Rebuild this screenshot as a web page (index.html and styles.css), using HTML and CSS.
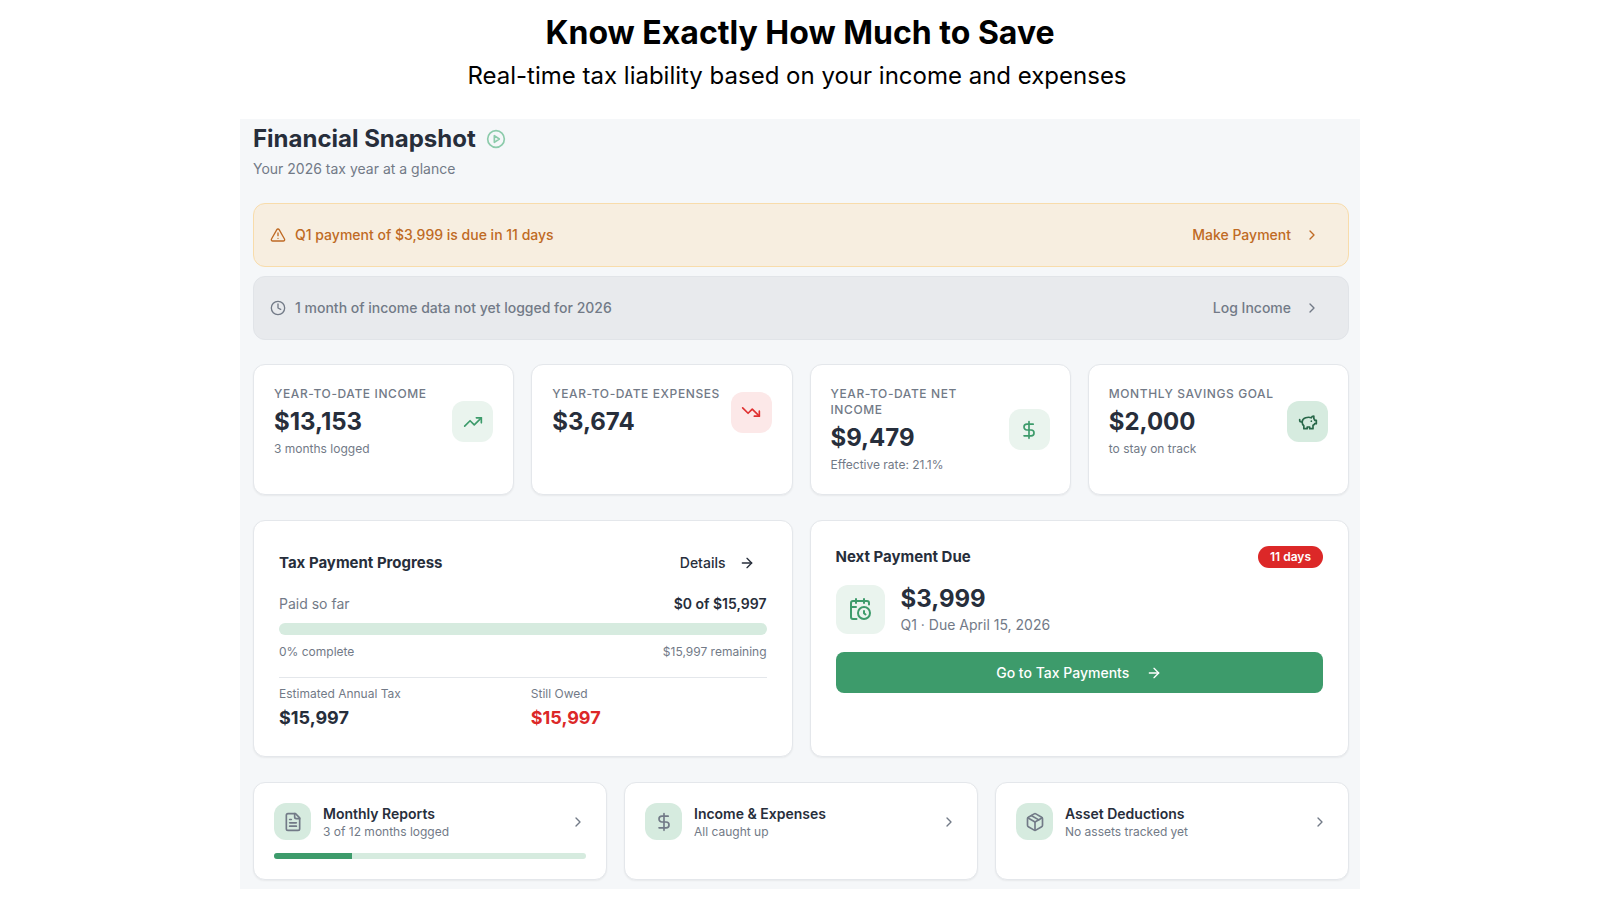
FILE: index.html
```html
<!DOCTYPE html>
<html lang="en">
<head>
    <meta charset="UTF-8">
    <meta name="viewport" content="width=device-width, initial-scale=1.0">
    <title>Financial Snapshot</title>
    <link rel="stylesheet" href="styles.css">
</head>
<body>
    <header class="hero">
        <h1>Know Exactly How Much to Save</h1>
        <p>Real-time tax liability based on your income and expenses</p>
    </header>

    <main class="dashboard">
        <div class="page-title">
            <h2>Financial Snapshot</h2>
            <button class="play" aria-label="Play tour">
                <svg class="icon icon-md" viewBox="0 0 24 24"><circle cx="12" cy="12" r="10"/><path d="m10 8 6 4-6 4z"/></svg>
            </button>
        </div>
        <p class="page-subtitle">Your 2026 tax year at a glance</p>

        <!-- Alerts -->
        <section class="alerts">
            <div class="alert alert-warning">
                <svg class="icon icon-sm" viewBox="0 0 24 24"><path d="m21.73 18-8-14a2 2 0 0 0-3.48 0l-8 14A2 2 0 0 0 4 21h16a2 2 0 0 0 1.73-3"/><path d="M12 9v4"/><path d="M12 17h.01"/></svg>
                <span>Q1 payment of $3,999 is due in 11 days</span>
                <button class="ghost">Make Payment
                    <svg class="icon icon-sm" viewBox="0 0 24 24"><path d="m9 18 6-6-6-6"/></svg>
                </button>
            </div>
            <div class="alert alert-muted">
                <svg class="icon icon-sm" viewBox="0 0 24 24"><circle cx="12" cy="12" r="10"/><path d="M12 6v6l4 2"/></svg>
                <span>1 month of income data not yet logged for 2026</span>
                <button class="ghost">Log Income
                    <svg class="icon icon-sm" viewBox="0 0 24 24"><path d="m9 18 6-6-6-6"/></svg>
                </button>
            </div>
        </section>

        <!-- Stats -->
        <section class="stats">
            <div class="card stat">
                <div class="stat-row">
                    <div>
                        <h3>Year-to-date Income</h3>
                        <p class="amount">$13,153</p>
                        <p class="note">3 months logged</p>
                    </div>
                    <div class="tile tile-green">
                        <svg class="icon icon-md" viewBox="0 0 24 24"><path d="M16 7h6v6"/><path d="m22 7-8.5 8.5-5-5L2 17"/></svg>
                    </div>
                </div>
            </div>
            <div class="card stat">
                <div class="stat-row">
                    <div>
                        <h3>Year-to-date Expenses</h3>
                        <p class="amount">$3,674</p>
                    </div>
                    <div class="tile tile-red">
                        <svg class="icon icon-md" viewBox="0 0 24 24"><path d="M16 17h6v-6"/><path d="m22 17-8.5-8.5-5 5L2 7"/></svg>
                    </div>
                </div>
            </div>
            <div class="card stat">
                <div class="stat-row">
                    <div>
                        <h3>Year-to-date Net Income</h3>
                        <p class="amount">$9,479</p>
                        <p class="note">Effective rate: 21.1%</p>
                    </div>
                    <div class="tile tile-green">
                        <svg class="icon icon-md" viewBox="0 0 24 24"><path d="M12 2v20"/><path d="M17 5H9.5a3.5 3.5 0 0 0 0 7h5a3.5 3.5 0 0 1 0 7H6"/></svg>
                    </div>
                </div>
            </div>
            <div class="card stat">
                <div class="stat-row">
                    <div>
                        <h3>Monthly Savings Goal</h3>
                        <p class="amount">$2,000</p>
                        <p class="note">to stay on track</p>
                    </div>
                    <div class="tile tile-dark">
                        <svg class="icon icon-md" viewBox="0 0 24 24"><path d="M19 5c-1.5 0-2.8 1.4-3 2-3.5-1.5-11-.3-11 5 0 1.8 0 3 2 4.5V20h4v-2h3v2h4v-4c1-.5 1.7-1 2-2h2v-4h-2c0-1-.5-1.5-1-2z"/><path d="M2 9v1c0 1.1.9 2 2 2h1"/><path d="M16 11h.01"/></svg>
                    </div>
                </div>
            </div>
        </section>

        <!-- Tax payments -->
        <section class="payments">
            <div class="card progress-card">
                <div class="row card-head">
                    <h3>Tax Payment Progress</h3>
                    <button class="ghost">Details
                        <svg class="icon icon-sm" viewBox="0 0 24 24"><path d="M5 12h14"/><path d="m12 5 7 7-7 7"/></svg>
                    </button>
                </div>
                <div class="row paid">
                    <span>Paid so far</span>
                    <strong>$0 of $15,997</strong>
                </div>
                <div class="bar"></div>
                <div class="row note">
                    <span>0% complete</span>
                    <span>$15,997 remaining</span>
                </div>
                <div class="totals">
                    <div>
                        <p class="note">Estimated Annual Tax</p>
                        <p class="total">$15,997</p>
                    </div>
                    <div>
                        <p class="note">Still Owed</p>
                        <p class="total owed">$15,997</p>
                    </div>
                </div>
            </div>

            <div class="card next-card">
                <div class="row">
                    <h3>Next Payment Due</h3>
                    <span class="badge">11 days</span>
                </div>
                <div class="due">
                    <div class="tile tile-large tile-green">
                        <svg class="icon icon-lg" viewBox="0 0 24 24"><path d="M21 7.5V6a2 2 0 0 0-2-2H5a2 2 0 0 0-2 2v14a2 2 0 0 0 2 2h3.5"/><path d="M16 2v4"/><path d="M8 2v4"/><path d="M3 10h5"/><path d="M17.5 17.5 16 16.3V14"/><circle cx="16" cy="16" r="6"/></svg>
                    </div>
                    <div>
                        <p class="amount">$3,999</p>
                        <p class="due-date">Q1 · Due April 15, 2026</p>
                    </div>
                </div>
                <button class="primary">Go to Tax Payments
                    <svg class="icon icon-sm" viewBox="0 0 24 24"><path d="M5 12h14"/><path d="m12 5 7 7-7 7"/></svg>
                </button>
            </div>
        </section>

        <!-- Shortcuts -->
        <section class="shortcuts">
            <a class="card shortcut" href="#reports">
                <div class="shortcut-row">
                    <div class="tile tile-small tile-gray">
                        <svg class="icon icon-md" viewBox="0 0 24 24"><path d="M15 2H6a2 2 0 0 0-2 2v16a2 2 0 0 0 2 2h12a2 2 0 0 0 2-2V7z"/><path d="M14 2v4a2 2 0 0 0 2 2h4"/><path d="M10 9H8"/><path d="M16 13H8"/><path d="M16 17H8"/></svg>
                    </div>
                    <div class="shortcut-text">
                        <h4>Monthly Reports</h4>
                        <p class="note">3 of 12 months logged</p>
                    </div>
                    <svg class="icon icon-sm" viewBox="0 0 24 24"><path d="m9 18 6-6-6-6"/></svg>
                </div>
                <div class="bar bar-thin"><div class="bar-fill" style="width: 25%"></div></div>
            </a>
            <a class="card shortcut" href="#income">
                <div class="shortcut-row">
                    <div class="tile tile-small tile-gray">
                        <svg class="icon icon-md" viewBox="0 0 24 24"><path d="M12 2v20"/><path d="M17 5H9.5a3.5 3.5 0 0 0 0 7h5a3.5 3.5 0 0 1 0 7H6"/></svg>
                    </div>
                    <div class="shortcut-text">
                        <h4>Income &amp; Expenses</h4>
                        <p class="note">All caught up</p>
                    </div>
                    <svg class="icon icon-sm" viewBox="0 0 24 24"><path d="m9 18 6-6-6-6"/></svg>
                </div>
            </a>
            <a class="card shortcut" href="#assets">
                <div class="shortcut-row">
                    <div class="tile tile-small tile-gray">
                        <svg class="icon icon-md" viewBox="0 0 24 24"><path d="M11 21.73a2 2 0 0 0 2 0l7-4A2 2 0 0 0 21 16V8a2 2 0 0 0-1-1.73l-7-4a2 2 0 0 0-2 0l-7 4A2 2 0 0 0 3 8v8a2 2 0 0 0 1 1.73z"/><path d="M12 22V12"/><path d="m3.3 7 8.7 5 8.7-5"/><path d="m7.5 4.27 9 5.15"/></svg>
                    </div>
                    <div class="shortcut-text">
                        <h4>Asset Deductions</h4>
                        <p class="note">No assets tracked yet</p>
                    </div>
                    <svg class="icon icon-sm" viewBox="0 0 24 24"><path d="m9 18 6-6-6-6"/></svg>
                </div>
            </a>
        </section>
    </main>
</body>
</html>
```
FILE: styles.css
```css
* {
    box-sizing: border-box;
}
body {
    font-family: Inter, "Liberation Sans", sans-serif;
    margin: 0;
    background-color: white;
    color: #272e3b;
    font-size: 14px;
    line-height: 20px;
}
h1, h2, h3, h4, p {
    margin: 0;
}
button {
    font: inherit;
    color: inherit;
    background: none;
    border: none;
    padding: 0;
    cursor: pointer;
}
.hero {
    text-align: center;
    color: black;
    padding: 12px 0 24px;
}
.hero h1 {
    font-size: 32px;
    line-height: 42px;
}
.hero p {
    font-size: 24px;
    line-height: 38px;
    padding: 3px 6px 0 0;
}
.dashboard {
    width: 70%;
    margin: 0 auto;
    padding: 4px 11px 9px 13px;
    background-color: #f5f7f9;
}

/* Icons */
.icon {
    display: block;
    flex: none;
    fill: none;
    stroke: currentColor;
    stroke-width: 2;
    stroke-linecap: round;
    stroke-linejoin: round;
}
.icon-sm {
    width: 16px;
    height: 16px;
}
.icon-md {
    width: 20px;
    height: 20px;
}
.icon-lg {
    width: 24px;
    height: 24px;
}

/* Page title */
.page-title {
    display: flex;
    align-items: center;
    gap: 10px;
}
.page-title h2 {
    font-size: 24px;
    line-height: 32px;
    font-weight: 700;
}
.play {
    color: #8ccbab;
}
.page-subtitle {
    color: #727a87;
    padding: 4px 0;
}

/* Alerts */
.alerts {
    display: grid;
    gap: 9px;
    margin: 20px 0 24px;
}
.alert {
    display: flex;
    align-items: center;
    gap: 9px;
    height: 64px;
    padding: 0 28px 0 16px;
    border: 1px solid;
    border-radius: 12px;
    font-weight: 500;
}
.alert-warning {
    background-color: #f7eee0;
    border-color: #f8dcab;
    color: #bf6a24;
}
.alert-muted {
    background-color: #e8eaed;
    border-color: #e1e4e8;
    color: #727a87;
}
.ghost {
    display: flex;
    align-items: center;
    gap: 13px;
    margin-left: auto;
    font-weight: 500;
}

/* Cards */
.card {
    background-color: white;
    border: 1px solid #e4e7eb;
    border-radius: 12px;
    box-shadow: 0 1px 2px rgba(0, 0, 0, 0.06);
}
.card h3 {
    font-size: 15px;
    line-height: 24px;
    font-weight: 700;
}
.row {
    display: flex;
    align-items: center;
    justify-content: space-between;
}
.note {
    color: #727a87;
    font-size: 12px;
    line-height: 16px;
}
.amount {
    font-size: 24px;
    line-height: 32px;
    font-weight: 700;
}
.tile {
    display: flex;
    align-items: center;
    justify-content: center;
    flex: none;
    width: 41px;
    height: 41px;
    border-radius: 12px;
}
.tile-small {
    width: 37px;
    height: 37px;
}
.tile-large {
    width: 49px;
    height: 49px;
}
.tile-green {
    background-color: #eaf4ee;
    color: #3d9b6b;
}
.tile-red {
    background-color: #fce8e8;
    color: #e03131;
}
.tile-dark {
    background-color: #d6ebdf;
    color: #286749;
}
.tile-gray {
    background-color: #d6ebdf;
    color: #727a87;
}

/* Stats */
.stats {
    display: grid;
    grid-template-columns: repeat(4, 1fr);
    gap: 17px;
}
.stat {
    padding: 21px 20px;
}
.stat-row {
    display: flex;
    align-items: center;
    justify-content: space-between;
}
.stat h3 {
    color: #727a87;
    font-size: 12px;
    line-height: 16px;
    font-weight: 500;
    letter-spacing: 0.05em;
    text-transform: uppercase;
    margin-bottom: 4px;
}
.stat .note {
    margin-top: 3px;
}

/* Tax payments */
.payments {
    display: grid;
    grid-template-columns: repeat(2, 1fr);
    gap: 17px;
    margin: 25px 0;
}
.progress-card {
    padding: 25px;
}
.next-card {
    padding: 24px 25px;
}
.card-head {
    padding: 5px 12px 4px 0;
    margin-bottom: 15px;
}
.paid span {
    color: #727a87;
}
.paid strong {
    font-weight: 600;
}
.bar {
    height: 12px;
    margin: 9px 0;
    border-radius: 6px;
    background-color: #d6ebdf;
    overflow: hidden;
}
.totals {
    display: grid;
    grid-template-columns: repeat(2, 1fr);
    gap: 16px;
    margin-top: 17px;
    padding-top: 8px;
    border-top: 1px solid #e4e7eb;
}
.total {
    margin-top: 3px;
    font-size: 18px;
    line-height: 26px;
    font-weight: 700;
}
.owed {
    color: #dc2828;
}
.badge {
    padding: 3px 12px;
    border-radius: 12px;
    background-color: #dc2828;
    color: white;
    font-size: 12px;
    line-height: 16px;
    font-weight: 600;
}
.due {
    display: flex;
    align-items: center;
    gap: 16px;
    margin: 14px 0 17px;
}
.due-date {
    color: #727a87;
}
.primary {
    display: flex;
    align-items: center;
    justify-content: center;
    gap: 17px;
    width: 100%;
    height: 41px;
    border-radius: 8px;
    background-color: #3d9b6b;
    color: white;
    font-weight: 500;
}

/* Shortcuts */
.shortcuts {
    display: grid;
    grid-template-columns: repeat(3, 1fr);
    gap: 17px;
}
.shortcut {
    padding: 20px;
    color: inherit;
    text-decoration: none;
}
.shortcut-row {
    display: flex;
    align-items: center;
    gap: 12px;
}
.shortcut-row > .icon {
    color: #727a87;
}
.shortcut-text {
    flex: 1;
}
.shortcut h4 {
    font-size: 14px;
    line-height: 20px;
    font-weight: 600;
}
.bar-thin {
    height: 6px;
    margin: 13px 0 0;
}
.bar-fill {
    height: 100%;
    background-color: #3d9b6b;
}
```
